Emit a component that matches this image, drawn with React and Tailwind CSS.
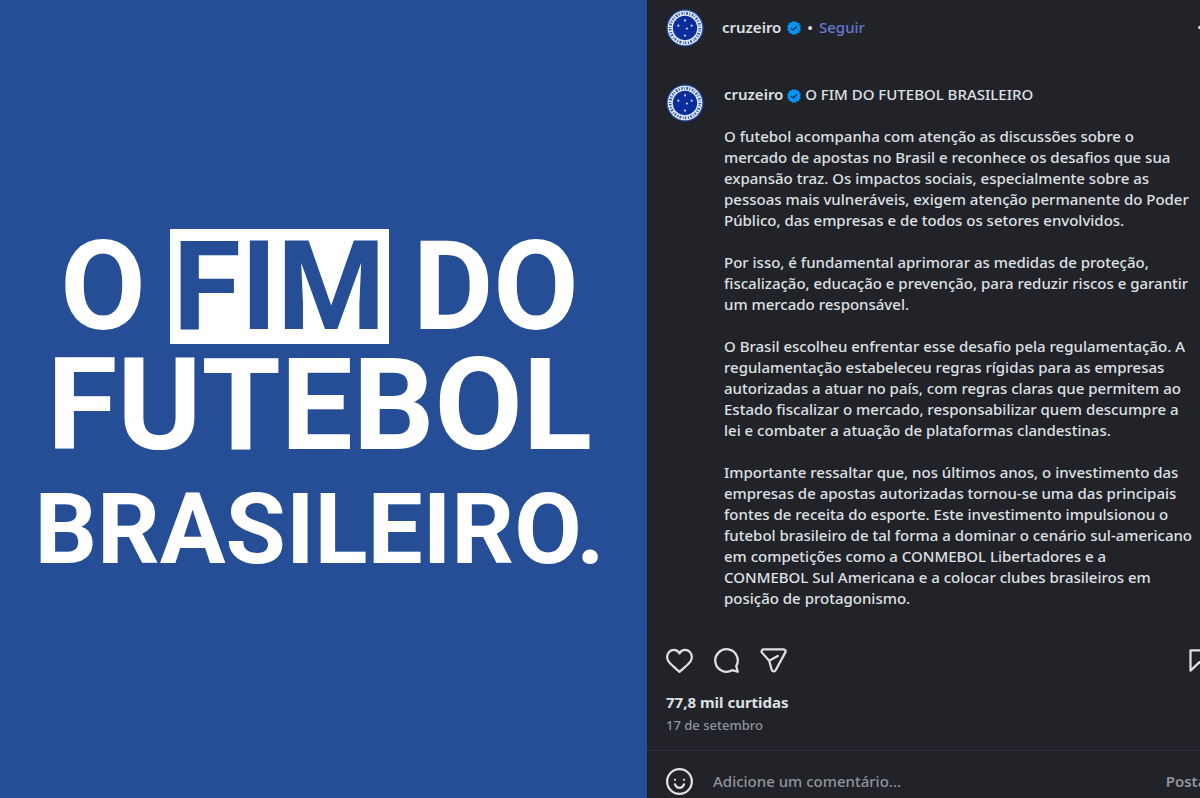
import { useState } from "react";

const caption = [
  "O futebol acompanha com atenção as discussões sobre o mercado de apostas no Brasil e reconhece os desafios que sua expansão traz. Os impactos sociais, especialmente sobre as pessoas mais vulneráveis, exigem atenção permanente do Poder Público, das empresas e de todos os setores envolvidos.",
  "Por isso, é fundamental aprimorar as medidas de proteção, fiscalização, educação e prevenção, para reduzir riscos e garantir um mercado responsável.",
  "O Brasil escolheu enfrentar esse desafio pela regulamentação. A regulamentação estabeleceu regras rígidas para as empresas autorizadas a atuar no país, com regras claras que permitem ao Estado fiscalizar o mercado, responsabilizar quem descumpre a lei e combater a atuação de plataformas clandestinas.",
  "Importante ressaltar que, nos últimos anos, o investimento das empresas de apostas autorizadas tornou-se uma das principais fontes de receita do esporte. Este investimento impulsionou o futebol brasileiro de tal forma a dominar o cenário sul-americano em competições como a CONMEBOL Libertadores e a CONMEBOL Sul Americana e a colocar clubes brasileiros em posição de protagonismo.",
];

const stars = [
  [20, 12],
  [13, 17.5],
  [27, 17.5],
  [22, 20.5],
  [20, 28],
];

function Avatar() {
  return (
    <svg viewBox="0 0 40 40" className="size-[38px] shrink-0" aria-hidden="true">
      <circle cx="20" cy="20" r="19.5" fill="#2450ae" />
      <circle cx="20" cy="20" r="18.2" fill="#e6ecf8" />
      <circle
        cx="20"
        cy="20"
        r="15.6"
        fill="none"
        stroke="#3a60b8"
        strokeWidth="3"
        strokeDasharray="1.6 1.2 0.9 1.6 2 1.3 1.2 1.7"
      />
      <circle cx="20" cy="20" r="12.8" fill="#0a2d9c" />
      {stars.map(([x, y]) => (
        <circle key={`${x}-${y}`} cx={x} cy={y} r="1.1" fill="#cfdaf5" />
      ))}
    </svg>
  );
}

function Verified() {
  return (
    <svg viewBox="0 0 40 40" className="inline-block size-[14px] shrink-0" role="img" aria-label="Verificado">
      <path
        fill="#0095f6"
        d="M19.998 3.094 14.638 0l-2.972 5.15H5.432v6.354L0 14.64 3.094 20 0 25.359l5.432 3.137v5.905h5.975L14.638 40l5.36-3.094L25.358 40l3.232-5.6h6.162v-6.01L40 25.359 36.905 20 40 14.641l-5.248-3.03v-6.46h-6.419L25.358 0l-5.36 3.094Z"
      />
      <path fill="none" stroke="#16324f" strokeWidth="4" d="m12 20.5 5.5 5.5L28.5 15" />
    </svg>
  );
}

function Icon({ children }) {
  return (
    <svg
      viewBox="0 0 24 24"
      className="size-[27px]"
      fill="none"
      stroke="currentColor"
      strokeWidth="2"
      strokeLinejoin="round"
      strokeLinecap="round"
      aria-hidden="true"
    >
      {children}
    </svg>
  );
}

function Poster() {
  return (
    <section className="flex min-w-0 flex-1 flex-col items-center justify-center bg-[#254e96] pr-2 pt-6 font-['Roboto',sans-serif] font-bold text-white">
      <h1 className="flex flex-col items-center whitespace-nowrap">
        <span className="flex items-center gap-6 text-[124px] leading-[109px]">
          <span>O</span>
          <span className="border-[3px] border-white bg-white text-[#254e96]">FIM</span>
          <span>DO</span>
        </span>
        <span className="text-[128px] leading-[122px]">FUTEBOL</span>
        <span className="text-[98px] leading-[128px]">BRASILEIRO.</span>
      </h1>
    </section>
  );
}

export default function App() {
  const [liked, setLiked] = useState(false);
  const [comment, setComment] = useState("");

  return (
    <main className="flex min-h-screen overflow-hidden bg-[#212328] font-['Noto_Sans',sans-serif] font-medium text-[#dfe0e3]">
      <Poster />

      <article className="-mr-[30px] flex w-[583px] shrink-0 flex-col">
        <header className="flex h-16 items-center border-b border-[#26282c] pb-2 pl-[19px] pr-2.5">
          <Avatar />
          <div className="ml-[18px] flex flex-1 items-center gap-1.5 text-[15px]">
            <a href="#cruzeiro" className="font-semibold">cruzeiro</a>
            <Verified />
            <span>•</span>
            <button className="text-[#6478cf]">Seguir</button>
          </div>
          <button aria-label="Mais opções">
            <Icon>
              <g fill="currentColor" stroke="none">
                <circle cx="6" cy="12" r="1.5" />
                <circle cx="12" cy="12" r="1.5" />
                <circle cx="18" cy="12" r="1.5" />
              </g>
            </Icon>
          </button>
        </header>

        {/* Caption */}
        <div className="flex flex-1 items-start gap-5 border-b border-[#26282c] pb-4 pl-[19px] pr-[37px] pt-5">
          <Avatar />
          <div className="space-y-[21px] text-[15px] leading-[21px]">
            <p>
              <a href="#cruzeiro" className="font-semibold">cruzeiro</a> <Verified /> O FIM DO FUTEBOL BRASILEIRO
            </p>
            {caption.map((text) => (
              <p key={text}>{text}</p>
            ))}
          </div>
        </div>

        {/* Actions */}
        <div className="pl-[19px] pr-[17px] pt-[17px]">
          <div className="flex gap-5">
            <button aria-label="Curtir" aria-pressed={liked} onClick={() => setLiked(!liked)}>
              <Icon>
                <path
                  fill={liked ? "currentColor" : "none"}
                  d="M16.8 2.6c3.6 0 6.2 2.8 6.2 6.4 0 3.6-2.9 5.9-5.7 8.4-2.6 2.3-4.5 4-5.3 4.7-.8-.7-2.7-2.4-5.3-4.7C3.9 14.9 1 12.6 1 9c0-3.6 2.6-6.4 6.2-6.4 2.2 0 3.7 1.1 4.8 3.1 1.1-2 2.6-3.1 4.8-3.1Z"
                />
              </Icon>
            </button>
            <button aria-label="Comentar">
              <Icon>
                <path d="M20.656 17.008a9.993 9.993 0 1 0-3.59 3.615L22 22Z" />
              </Icon>
            </button>
            <button aria-label="Compartilhar">
              <Icon>
                <path d="M3 2.2h18a1.7 1.7 0 0 1 1.5 2.6l-8.6 15.8a1.9 1.9 0 0 1-3.5-.4L8.2 12.2 1.8 5A1.7 1.7 0 0 1 3 2.2ZM8.2 12.2l7.6-4.2" />
              </Icon>
            </button>
            <button aria-label="Salvar" className="ml-auto">
              <Icon>
                <path d="M20 21l-8-7.56L4 21V3h16Z" />
              </Icon>
            </button>
          </div>
          <p className="mt-[17px] text-[15px] font-bold leading-[22px]">77,8 mil curtidas</p>
          <time className="block text-[13px] leading-6 text-[#8f949c]">17 de setembro</time>
        </div>

        <form
          className="mt-[13px] flex h-12 items-center border-t border-[#2d3339] pl-[19px] pr-[17px] pt-3.5 text-[15px] text-[#8f949c]"
          onSubmit={(e) => e.preventDefault()}
        >
          <button type="button" aria-label="Emoji" className="text-[#dfe0e3]">
            <Icon>
              <circle cx="12" cy="12" r="11" />
              <path d="M8 14.5c1 2.6 2.4 3.1 4 3.1s3-.5 4-3.1" />
              <path d="M8 10.5h.01M16 10.5h.01" />
            </Icon>
          </button>
          <input
            aria-label="Adicione um comentário"
            placeholder="Adicione um comentário..."
            value={comment}
            onChange={(e) => setComment(e.target.value)}
            className="ml-5 min-w-0 flex-1 bg-transparent outline-none placeholder:text-[#8f949c]"
          />
          <button className="font-semibold">Postar</button>
        </form>
      </article>
    </main>
  );
}
